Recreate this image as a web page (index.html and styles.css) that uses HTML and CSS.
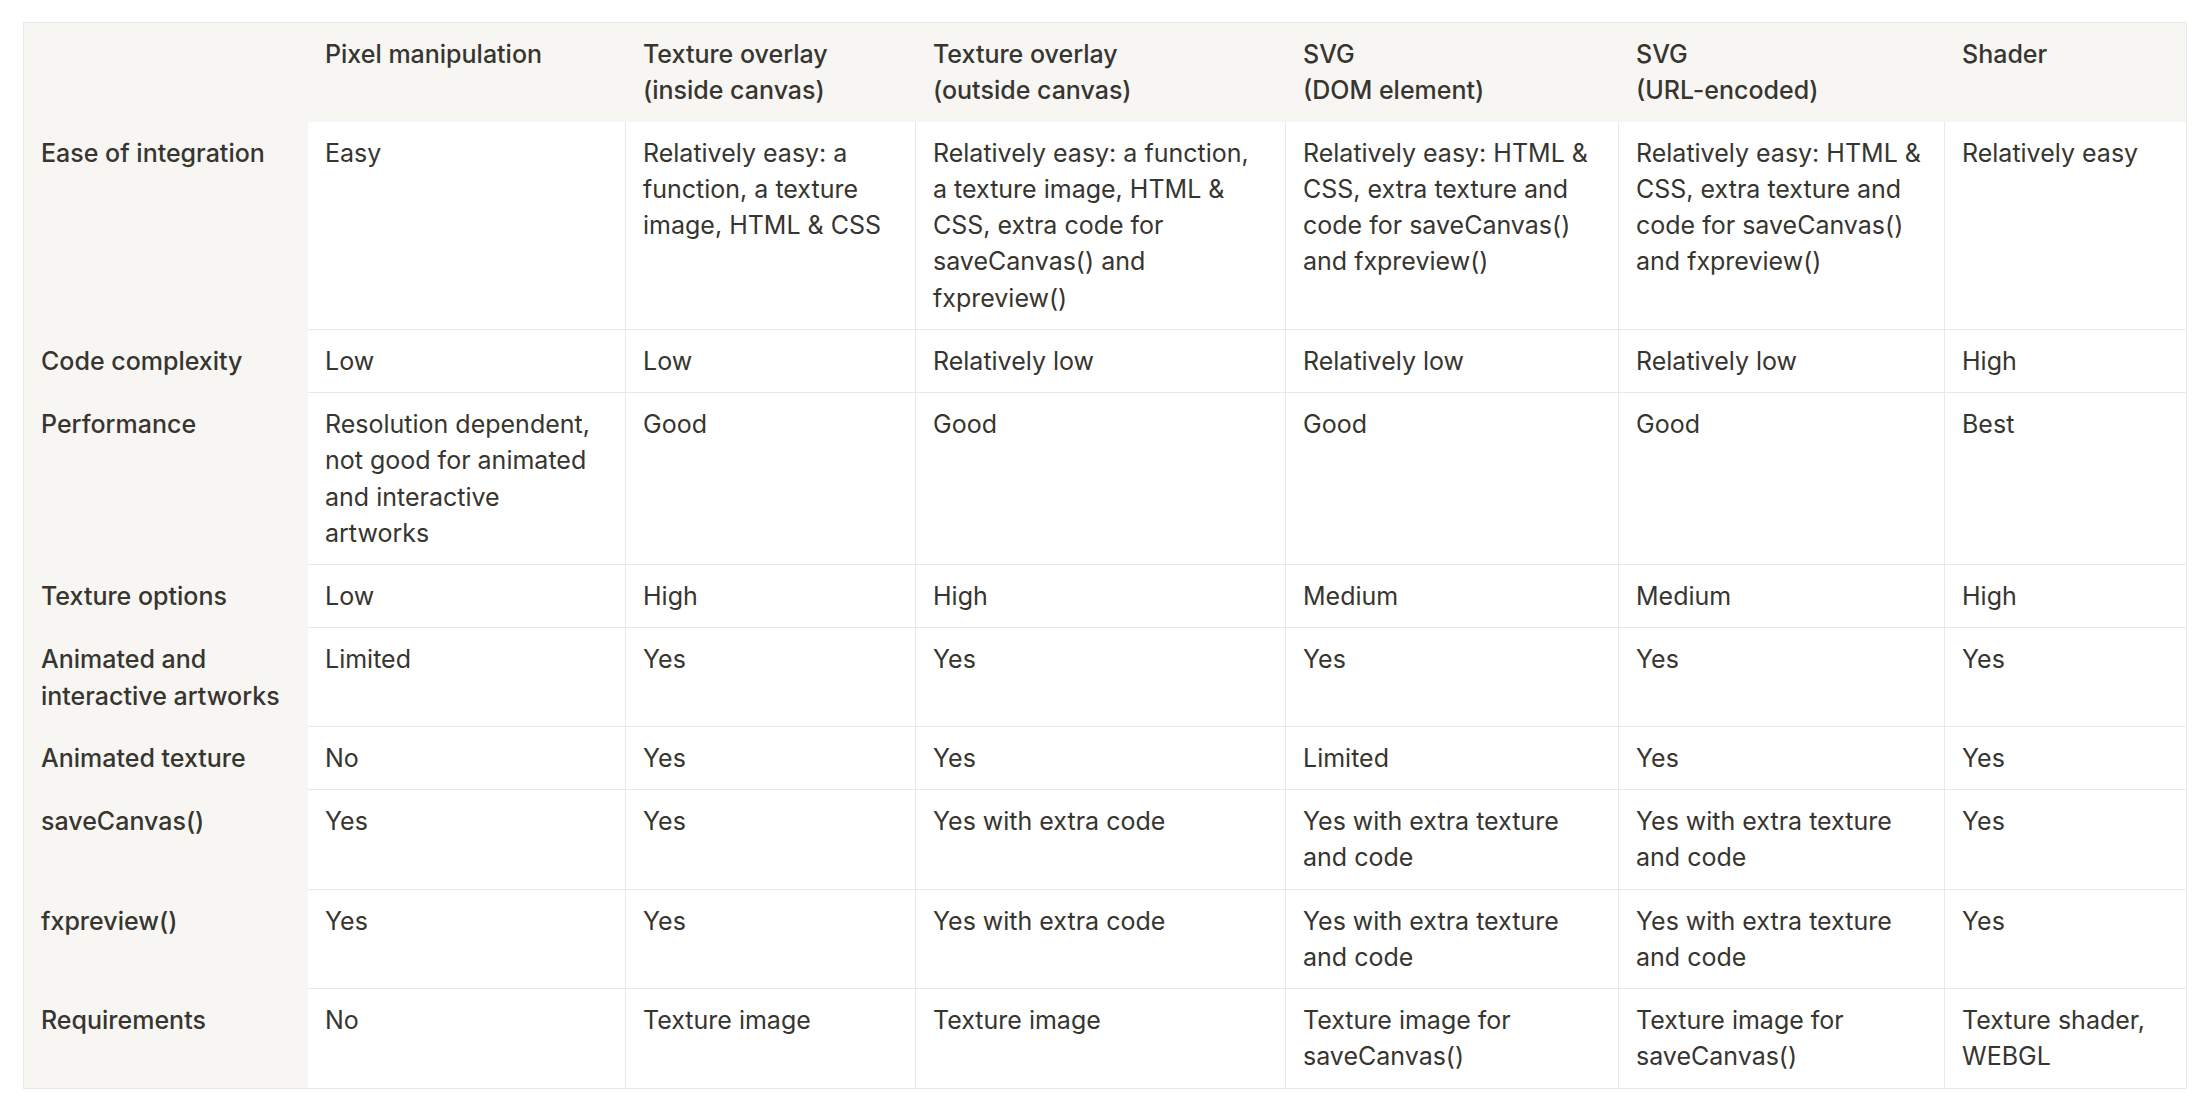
FILE: index.html
```html
<!DOCTYPE html>
<html lang="en">
<head>
<meta charset="utf-8">
<title>Texture techniques comparison</title>
<link rel="stylesheet" href="styles.css">
</head>
<body>
<div class="page">
<table class="cmp">
  <colgroup>
    <col class="c0"><col class="c1"><col class="c2"><col class="c3"><col class="c4"><col class="c5"><col class="c6">
  </colgroup>
  <thead>
    <tr>
      <th class="corner"></th>
      <th>Pixel manipulation</th>
      <th>Texture overlay<br>(inside canvas)</th>
      <th>Texture overlay<br>(outside canvas)</th>
      <th>SVG<br>(DOM element)</th>
      <th>SVG<br>(URL-encoded)</th>
      <th class="last">Shader</th>
    </tr>
  </thead>
  <tbody>
    <tr>
      <th>Ease of integration</th>
      <td class="first">Easy</td>
      <td>Relatively easy: a function, a texture image, HTML &amp; CSS</td>
      <td>Relatively easy: a function, a texture image, HTML &amp; CSS, extra code for saveCanvas() and fxpreview()</td>
      <td>Relatively easy: HTML &amp; CSS, extra texture and code for saveCanvas() and fxpreview()</td>
      <td>Relatively easy: HTML &amp; CSS, extra texture and code for saveCanvas() and fxpreview()</td>
      <td>Relatively easy</td>
    </tr>
    <tr>
      <th>Code complexity</th>
      <td class="first">Low</td>
      <td>Low</td>
      <td>Relatively low</td>
      <td>Relatively low</td>
      <td>Relatively low</td>
      <td>High</td>
    </tr>
    <tr>
      <th>Performance</th>
      <td class="first">Resolution dependent, not good for animated and interactive artworks</td>
      <td>Good</td>
      <td>Good</td>
      <td>Good</td>
      <td>Good</td>
      <td>Best</td>
    </tr>
    <tr>
      <th>Texture options</th>
      <td class="first">Low</td>
      <td>High</td>
      <td>High</td>
      <td>Medium</td>
      <td>Medium</td>
      <td>High</td>
    </tr>
    <tr>
      <th>Animated and interactive artworks</th>
      <td class="first">Limited</td>
      <td>Yes</td>
      <td>Yes</td>
      <td>Yes</td>
      <td>Yes</td>
      <td>Yes</td>
    </tr>
    <tr>
      <th>Animated texture</th>
      <td class="first">No</td>
      <td>Yes</td>
      <td>Yes</td>
      <td>Limited</td>
      <td>Yes</td>
      <td>Yes</td>
    </tr>
    <tr>
      <th>saveCanvas()</th>
      <td class="first">Yes</td>
      <td>Yes</td>
      <td>Yes with extra code</td>
      <td>Yes with extra texture and code</td>
      <td>Yes with extra texture and code</td>
      <td>Yes</td>
    </tr>
    <tr>
      <th>fxpreview()</th>
      <td class="first">Yes</td>
      <td>Yes</td>
      <td>Yes with extra code</td>
      <td>Yes with extra texture and code</td>
      <td>Yes with extra texture and code</td>
      <td>Yes</td>
    </tr>
    <tr>
      <th>Requirements</th>
      <td class="first">No</td>
      <td>Texture image</td>
      <td>Texture image</td>
      <td>Texture image for saveCanvas()</td>
      <td>Texture image for saveCanvas()</td>
      <td>Texture shader, WEBGL</td>
    </tr>
  </tbody>
</table>
</div>
</body>
</html>
```

FILE: styles.css
```css
html, body {
  margin: 0;
  padding: 0;
  background: #ffffff;
}

.page {
  padding: 22px 23px 18px 23px;
}

.cmp {
  width: 2164px;
  table-layout: fixed;
  border-collapse: separate;
  border-spacing: 0;
  border: 1px solid #e9e9e7;
  font-family: Inter, "Noto Sans", sans-serif;
  font-size: 25px;
  line-height: 36.25px;
  color: #37352f;
}

.c0 { width: 284px; }
.c1 { width: 318px; }
.c2 { width: 290px; }
.c3 { width: 370px; }
.c4 { width: 333px; }
.c5 { width: 326px; }
.c6 { width: 241px; }

.cmp th,
.cmp td {
  text-align: left;
  vertical-align: top;
  padding: 13px 18px 13px 17px;
}

.cmp th {
  background: #f7f6f3;
  font-weight: 500;
}

.cmp td {
  font-weight: 400;
  border-right: 1px solid #e9e9e7;
  border-bottom: 1px solid #e9e9e7;
}

.cmp tbody tr:last-child td {
  border-bottom: none;
}

.cmp td:last-child {
  border-right: none;
}
```
